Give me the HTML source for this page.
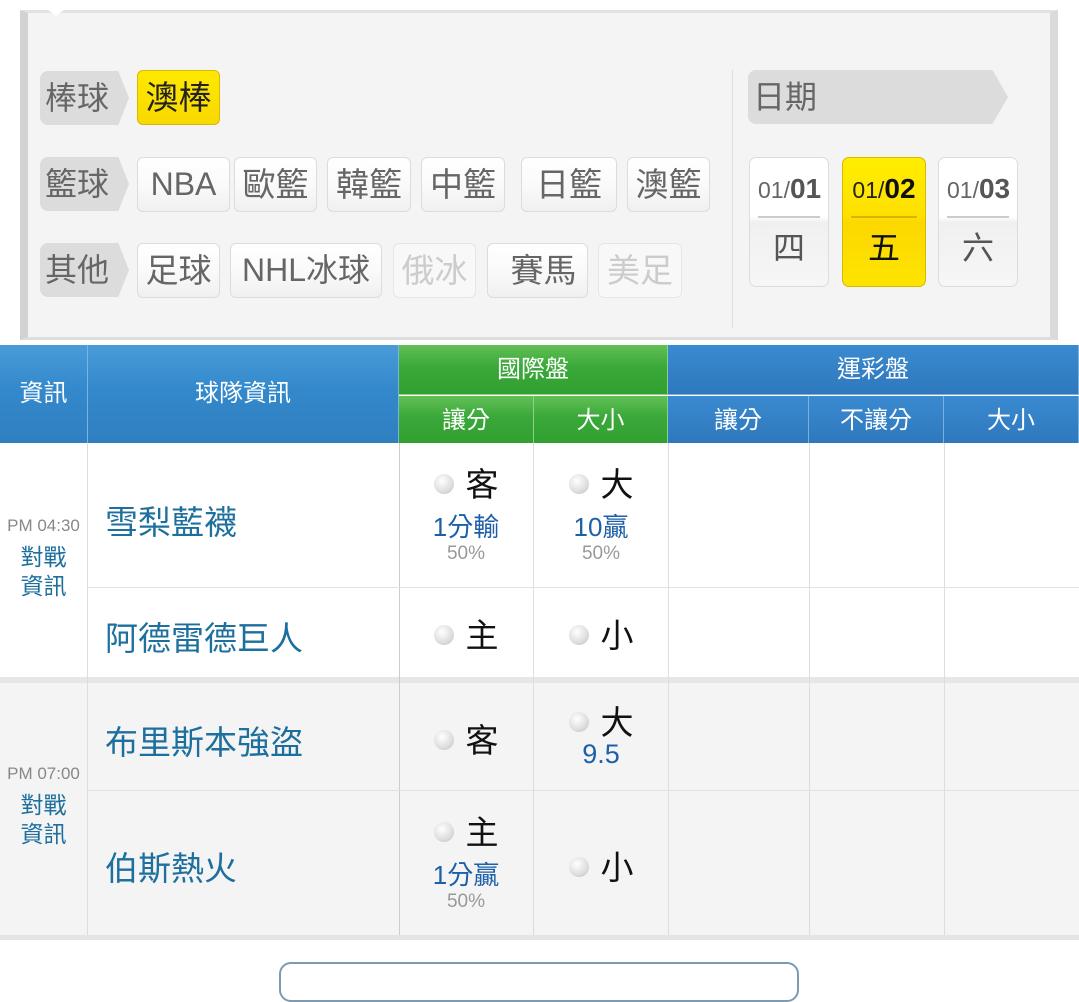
<!DOCTYPE html>
<html><head><meta charset="utf-8">
<style>
*{margin:0;padding:0;box-sizing:border-box}
body{width:1079px;height:982px;background:#fff;position:relative;overflow:hidden;font-family:"Liberation Sans","Noto Sans CJK TC",sans-serif}
.a{position:absolute}
.panel{left:20px;top:10px;width:1038px;height:330px;background:#f4f4f4;border:1px solid #d4d4d4;border-left:8px solid #d2d2d2;border-right:8px solid #dadada;border-top:3px solid #e2e2e2;border-bottom:3px solid #dedede}
.tag{height:54px;background:#dcdcdc;border-radius:8px 0 0 8px;color:#666;font-size:32px;line-height:54px;padding-left:5px;clip-path:polygon(0 0,88% 0,100% 50%,88% 100%,0 100%)}
.btn{height:55px;border:1px solid #dcdcdc;border-radius:6px;background:linear-gradient(#fff,#fafafa 50%,#f0f0f0);color:#666;font-size:33px;line-height:53px;text-align:center}
.dis{color:#ccc;border-color:#e6e6e6;background:#f8f8f8}
.yel{background:linear-gradient(#ffe900,#f8d800);border-color:#d8b800;color:#222}
.card{top:157px;height:130px;border:1px solid #dcdcdc;border-radius:7px;background:#f8f8f8;text-align:center}
.card .d{height:60px;line-height:62px;font-size:23px;color:#666;border-bottom:2px solid #ccc;margin:0 8px;background:transparent}
.card .d b{font-size:28px;color:#555}
.card .w{font-size:32px;color:#555;line-height:60px}
.hb{background:linear-gradient(#4a9cd8,#3389cc 45%,#2f7fc0);color:#fff;text-align:center;font-size:24px;border-right:1px solid #7ab4e0}
.hg{background:linear-gradient(#62c055,#3aa83a 45%,#30a030);color:#fff;text-align:center;font-size:24px;border-right:1px solid #8cd08c}
.hb2{background:linear-gradient(#3a8ad0,#2f78bd);color:#fff;text-align:center;font-size:24px;border-right:1px solid #7ab0dc}
.team{color:#1d6f9e;font-size:33px}
.vl{width:1px;background:#ddd}
.hl{height:1px;background:#e2e2e2}
.r{display:inline-block;width:20px;height:20px;border-radius:50%;background:radial-gradient(circle at 40% 35%,#fff,#ddd 60%,#bbb);vertical-align:middle;margin-right:12px;position:relative;top:-3px}
.o{text-align:center;color:#111;font-size:33px}
.v{color:#1d5fa8;font-size:26px;text-align:center}
.p{color:#999;font-size:19px;text-align:center}
</style></head><body>
<div class="a panel"></div>
<div class="a" style="left:48px;top:10px;width:0;height:0;border-left:8px solid transparent;border-right:8px solid transparent;border-top:6px solid #fff"></div>
<div class="a" style="left:732px;top:70px;width:1px;height:258px;background:#ddd"></div>

<div class="a tag" style="left:40px;top:71px;width:89px">棒球</div>
<div class="a btn yel" style="left:137px;top:70px;width:83px">澳棒</div>

<div class="a tag" style="left:40px;top:157px;width:89px">籃球</div>
<div class="a btn" style="left:137px;top:157px;width:93px;font-size:32px">NBA</div>
<div class="a btn" style="left:234px;top:157px;width:83px">歐籃</div>
<div class="a btn" style="left:327px;top:157px;width:84px">韓籃</div>
<div class="a btn" style="left:421px;top:157px;width:84px">中籃</div>
<div class="a btn" style="left:521px;top:157px;width:96px">日籃</div>
<div class="a btn" style="left:627px;top:157px;width:83px">澳籃</div>

<div class="a tag" style="left:40px;top:243px;width:89px">其他</div>
<div class="a btn" style="left:137px;top:243px;width:83px">足球</div>
<div class="a btn" style="left:230px;top:243px;width:152px;font-size:32px">NHL冰球</div>
<div class="a btn dis" style="left:393px;top:243px;width:83px">俄冰</div>
<div class="a btn" style="left:487px;top:243px;width:101px;text-indent:12px">賽馬</div>
<div class="a btn dis" style="left:598px;top:243px;width:84px">美足</div>

<div class="a tag" style="left:748px;top:70px;width:260px;clip-path:polygon(0 0,94% 0,100% 50%,94% 100%,0 100%)">日期</div>
<div class="a card" style="left:749px;width:80px;background:linear-gradient(#fff 46%,#f0f0f0 50%,#f6f6f6)"><div class="d">01/<b>01</b></div><div class="w">四</div></div>
<div class="a card" style="left:842px;width:84px;background:linear-gradient(#ffee00,#ffe000 46%,#fcd800 50%,#fde400);border-color:#d8b800"><div class="d" style="color:#222;border-color:#d8b400">01/<b style="color:#111">02</b></div><div class="w" style="color:#111">五</div></div>
<div class="a card" style="left:938px;width:80px;background:linear-gradient(#fff 46%,#f0f0f0 50%,#f6f6f6)"><div class="d">01/<b>03</b></div><div class="w">六</div></div>

<div class="a hb" style="left:0;top:345px;width:88px;height:98px;line-height:98px">資訊</div>
<div class="a hb" style="left:88px;top:345px;width:311px;height:98px;line-height:98px">球隊資訊</div>
<div class="a hg" style="left:399px;top:345px;width:269px;height:50px;line-height:50px;border-bottom:1px solid #8cd08c">國際盤</div>
<div class="a hg" style="left:399px;top:396px;width:135px;height:47px;line-height:49px">讓分</div>
<div class="a hg" style="left:534px;top:396px;width:134px;height:47px;line-height:49px">大小</div>
<div class="a hb2" style="left:668px;top:345px;width:411px;height:50px;line-height:50px;border-bottom:1px solid #7ab0dc">運彩盤</div>
<div class="a hb2" style="left:668px;top:396px;width:141px;height:47px;line-height:49px">讓分</div>
<div class="a hb2" style="left:809px;top:396px;width:135px;height:47px;line-height:49px">不讓分</div>
<div class="a hb2" style="left:944px;top:396px;width:135px;height:47px;line-height:49px">大小</div>

<div class="a" style="left:0;top:443px;width:1079px;height:234px;background:#fff"></div>
<div class="a" style="left:0;top:677px;width:1079px;height:6px;background:#e6e6e6"></div>
<div class="a" style="left:0;top:683px;width:1079px;height:252px;background:#f4f4f4"></div>
<div class="a" style="left:0;top:935px;width:1079px;height:5px;background:#e4e4e4"></div>

<div class="a vl" style="left:87px;top:443px;height:492px"></div>
<div class="a vl" style="left:399px;top:443px;height:492px;background:#ccc"></div>
<div class="a vl" style="left:533px;top:443px;height:492px"></div>
<div class="a vl" style="left:668px;top:443px;height:492px"></div>
<div class="a vl" style="left:809px;top:443px;height:492px"></div>
<div class="a vl" style="left:944px;top:443px;height:492px"></div>
<div class="a hl" style="left:88px;top:587px;width:991px"></div>
<div class="a hl" style="left:88px;top:790px;width:991px"></div>

<div class="a" style="left:0;top:516px;width:87px;text-align:center;font-size:17px;color:#888">PM 04:30</div>
<div class="a" style="left:0;top:543px;width:87px;text-align:center;font-size:23px;line-height:29px;color:#1d6f9e">對戰<br>資訊</div>
<div class="a" style="left:0;top:764px;width:87px;text-align:center;font-size:17px;color:#888">PM 07:00</div>
<div class="a" style="left:0;top:791px;width:87px;text-align:center;font-size:23px;line-height:29px;color:#1d6f9e">對戰<br>資訊</div>

<div class="a team" style="left:105px;top:496px">雪梨藍襪</div>
<div class="a team" style="left:105px;top:612px">阿德雷德巨人</div>
<div class="a team" style="left:105px;top:716px">布里斯本強盜</div>
<div class="a team" style="left:105px;top:842px">伯斯熱火</div>

<div class="a o" style="left:399px;top:458px;width:134px"><span class="r"></span>客</div>
<div class="a v" style="left:399px;top:507px;width:134px">1分輸</div>
<div class="a p" style="left:399px;top:543px;width:134px">50%</div>
<div class="a o" style="left:534px;top:458px;width:134px"><span class="r"></span>大</div>
<div class="a v" style="left:534px;top:507px;width:134px">10贏</div>
<div class="a p" style="left:534px;top:543px;width:134px">50%</div>

<div class="a o" style="left:399px;top:609px;width:134px"><span class="r"></span>主</div>
<div class="a o" style="left:534px;top:609px;width:134px"><span class="r"></span>小</div>

<div class="a o" style="left:399px;top:714px;width:134px"><span class="r"></span>客</div>
<div class="a o" style="left:534px;top:696px;width:134px"><span class="r"></span>大</div>
<div class="a v" style="left:534px;top:739px;width:134px;font-size:27px">9.5</div>

<div class="a o" style="left:399px;top:806px;width:134px"><span class="r"></span>主</div>
<div class="a v" style="left:399px;top:855px;width:134px">1分贏</div>
<div class="a p" style="left:399px;top:891px;width:134px">50%</div>
<div class="a o" style="left:534px;top:841px;width:134px"><span class="r"></span>小</div>

<div class="a" style="left:279px;top:962px;width:520px;height:40px;border:2px solid #7d9ab3;border-radius:12px;background:#fff"></div>
</body></html>
